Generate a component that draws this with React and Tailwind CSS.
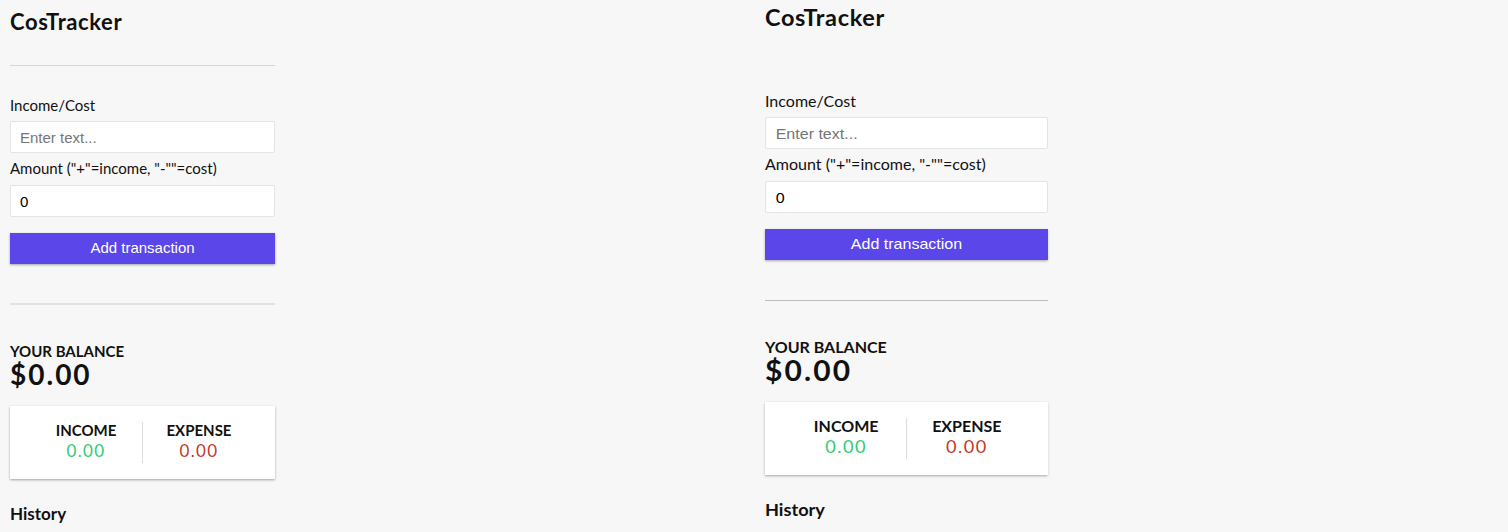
import React from "react";

function Panel({ right }) {
  const lato = { fontFamily: "Lato, 'Noto Sans', sans-serif" };
  const arial = { fontFamily: "'Liberation Sans', Arial, sans-serif" };
  return (
    <div
      className={
        "w-[265px] text-[#111] " +
        (right ? "origin-left scale-x-[1.068] pt-[6px]" : "pt-[10px]")
      }
      style={lato}
    >
      <div className="text-[22px] leading-[24px] font-bold tracking-[0.6px]">CosTracker</div>
      <div className={"mt-[31px] h-px " + (right ? "bg-transparent" : "bg-[#d6d6d6]")} />

      <div className="mt-[31px] text-[15px] leading-[17px]">Income/Cost</div>
      <input
        type="text"
        placeholder="Enter text..."
        className="mt-[7px] block h-[32px] w-full rounded-[2px] border border-[#e4e4e4] bg-white px-[9px] text-[15px] text-black outline-none placeholder:text-[#767676]"
        style={arial}
      />
      <div className="mt-[7px] text-[15px] leading-[17px]">
        Amount ("+"=income, "-""=cost)
      </div>
      <input
        type="number"
        defaultValue="0"
        className="mt-[8px] block h-[32px] w-full rounded-[2px] border border-[#e4e4e4] bg-white px-[9px] text-[15px] text-black outline-none"
        style={arial}
      />
      <button
        className="mt-[16px] block h-[31px] w-full bg-[#5b46e9] text-[15px] text-white shadow-[0_1px_3px_rgba(0,0,0,0.12),0_1px_2px_rgba(0,0,0,0.24)]"
        style={arial}
      >
        Add transaction
      </button>

      <div
        className={
          right
            ? "mt-[40px] h-px bg-[#bdbdbd]"
            : "mt-[39px] h-[2px] bg-[#e2e2e2]"
        }
      />

      <div className="mt-[38px] text-[15px] leading-[17px] font-bold uppercase">
        Your Balance
      </div>
      <div className="text-[28px] leading-[28px] font-bold tracking-[2px]">$0.00</div>

      <div className="mt-[18px] flex bg-white px-[20px] py-[16px] shadow-[0_1px_3px_rgba(0,0,0,0.12),0_1px_2px_rgba(0,0,0,0.24)]">
        <div className="flex-1 border-r border-[#dedede] pb-[2px] text-center">
          <div className="text-[15px] leading-[16px] font-bold uppercase">Income</div>
          <div className="mt-[3px] text-[17px] leading-[20px] tracking-[1.4px] text-[#2ecc71]">
            0.00
          </div>
        </div>
        <div className="flex-1 pb-[2px] text-center">
          <div className="text-[15px] leading-[16px] font-bold uppercase">Expense</div>
          <div className="mt-[3px] text-[17px] leading-[20px] tracking-[1.4px] text-[#c0392b]">
            0.00
          </div>
        </div>
      </div>

      <div className="mt-[25px] text-[17px] leading-[20px] font-bold">History</div>
    </div>
  );
}

export default function App() {
  return (
    <div className="flex h-[532px] w-full overflow-hidden bg-[#f7f7f7]">
      <div className="w-1/2 pl-[10px]">
        <Panel />
      </div>
      <div className="w-1/2 pl-[11px]">
        <Panel right />
      </div>
    </div>
  );
}
